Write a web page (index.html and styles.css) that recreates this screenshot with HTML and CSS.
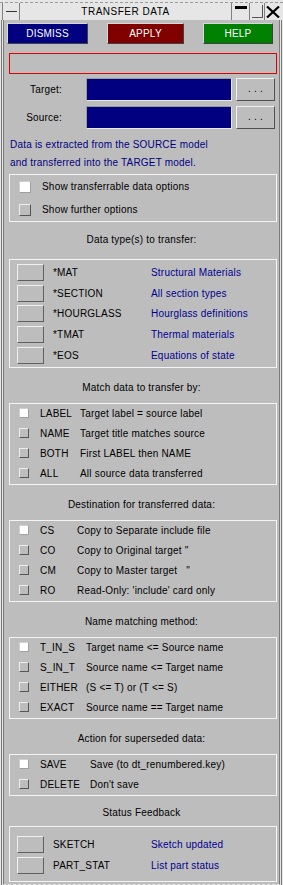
FILE: index.html
```html
<!DOCTYPE html>
<html>
<head>
    <meta charset="utf-8">
    <title>Transfer Data</title>
    <meta name="viewport" content="width=device-width, initial-scale=1">
    <link rel="stylesheet" href="styles.css">
</head>
<body>
    <div class="titlebar">
        <div class="tb-menu"><span class="tb-dash"></span></div>
        <div class="tb-title">TRANSFER DATA</div>
        <div class="tb-btn tb-min"><span></span></div>
        <div class="tb-btn tb-max"><span></span></div>
        <div class="tb-btn tb-close">
            <svg width="14" height="12" viewBox="0 0 14 12">
                <path d="M1 0.5 L13 11.5 M13 0.5 L1 11.5" stroke="#000" stroke-width="2.2" fill="none"/>
            </svg>
        </div>
    </div>

    <div class="frame">
    <div class="panel">
        <div class="actions">
            <div class="btn btn-dismiss">DISMISS</div>
            <div class="btn btn-apply">APPLY</div>
            <div class="btn btn-help">HELP</div>
        </div>

        <div class="message"></div>

        <div class="field-row">
            <div class="field-label">Target:</div>
            <div class="field"></div>
            <div class="browse">. . .</div>
        </div>
        <div class="field-row source-row">
            <div class="field-label">Source:</div>
            <div class="field"></div>
            <div class="browse">. . .</div>
        </div>

        <p class="note">Data is extracted from the SOURCE model<br>and transferred into the TARGET model.</p>

        <div class="group group-options">
            <div class="row"><span class="check big on"></span><span>Show transferrable data options</span></div>
            <div class="row"><span class="check big"></span><span>Show further options</span></div>
        </div>

        <div class="heading heading-first">Data type(s) to transfer:</div>
        <div class="group group-types">
            <div class="row"><span class="tbtn"></span><span class="code">*MAT</span><span class="desc">Structural Materials</span></div>
            <div class="row"><span class="tbtn"></span><span class="code">*SECTION</span><span class="desc">All section types</span></div>
            <div class="row"><span class="tbtn"></span><span class="code">*HOURGLASS</span><span class="desc">Hourglass definitions</span></div>
            <div class="row"><span class="tbtn"></span><span class="code">*TMAT</span><span class="desc">Thermal materials</span></div>
            <div class="row"><span class="tbtn"></span><span class="code">*EOS</span><span class="desc">Equations of state</span></div>
        </div>

        <div class="heading">Match data to transfer by:</div>
        <div class="group group-list group-match">
            <div class="row"><span class="check on"></span><span class="code">LABEL</span><span>Target label = source label</span></div>
            <div class="row"><span class="check"></span><span class="code">NAME</span><span>Target title matches source</span></div>
            <div class="row"><span class="check"></span><span class="code">BOTH</span><span>First LABEL then NAME</span></div>
            <div class="row"><span class="check"></span><span class="code">ALL</span><span>All source data transferred</span></div>
        </div>

        <div class="heading">Destination for transferred data:</div>
        <div class="group group-list group-dest">
            <div class="row"><span class="check on"></span><span class="code">CS</span><span>Copy to Separate include file</span></div>
            <div class="row"><span class="check"></span><span class="code">CO</span><span>Copy to Original target "</span></div>
            <div class="row"><span class="check"></span><span class="code">CM</span><span>Copy to Master target &nbsp; "</span></div>
            <div class="row"><span class="check"></span><span class="code">RO</span><span>Read-Only: 'include' card only</span></div>
        </div>

        <div class="heading">Name matching method:</div>
        <div class="group group-list group-names">
            <div class="row"><span class="check on"></span><span class="code">T_IN_S</span><span>Target name &lt;= Source name</span></div>
            <div class="row"><span class="check"></span><span class="code">S_IN_T</span><span>Source name &lt;= Target name</span></div>
            <div class="row"><span class="check"></span><span class="code">EITHER</span><span>(S &lt;= T) or (T &lt;= S)</span></div>
            <div class="row"><span class="check"></span><span class="code">EXACT</span><span>Source name == Target name</span></div>
        </div>

        <div class="heading">Action for superseded data:</div>
        <div class="group group-list group-action">
            <div class="row"><span class="check on"></span><span class="code">SAVE</span><span>Save (to dt_renumbered.key)</span></div>
            <div class="row"><span class="check"></span><span class="code">DELETE</span><span>Don't save</span></div>
        </div>

        <div class="heading heading-last">Status Feedback</div>
        <div class="group group-types group-status">
            <div class="row"><span class="tbtn"></span><span class="code">SKETCH</span><span class="desc">Sketch updated</span></div>
            <div class="row"><span class="tbtn"></span><span class="code">PART_STAT</span><span class="desc">List part status</span></div>
        </div>
    </div>
    </div>
</body>
</html>
```

FILE: styles.css
```css
body {
    margin: 0;
    width: 283px;
    height: 885px;
    overflow: hidden;
    background-color: #e6e6e6;
    color: #000;
    font-family: "Liberation Sans", Arial, sans-serif;
    font-size: 10px;
    letter-spacing: 0.2px;
}

/* window title bar */
.titlebar {
    display: flex;
    box-sizing: border-box;
    border-top: 1px dashed #9a9a9a;
    margin-top: 2px;
    height: 18px;
    background-color: #e6e6e6;
}

.tb-menu {
    width: 16px;
    margin-left: 2px;
    border-left: 1px solid #808080;
    border-right: 1px solid #808080;
    display: flex;
    align-items: center;
    justify-content: center;
}

.tb-dash {
    width: 11px;
    height: 1px;
    background-color: #333;
}

.tb-title {
    flex: 1;
    text-align: center;
    line-height: 17px;
    font-size: 10px;
    letter-spacing: 0.5px;
    border-right: 1px solid #808080;
}

.tb-btn {
    display: flex;
    align-items: center;
    justify-content: center;
}

.tb-min {
    width: 17px;
    border-right: 1px solid #808080;
    align-items: flex-start;
}

.tb-min span {
    width: 12px;
    height: 3px;
    margin-top: 3px;
    background-color: #000;
}

.tb-max {
    width: 14px;
    align-items: flex-end;
    justify-content: flex-end;
}

.tb-max span {
    width: 10px;
    height: 12px;
    margin: 0 1px 2px 0;
    border-right: 1px solid #555;
    border-bottom: 1px solid #555;
}

.tb-close {
    width: 16px;
    margin-right: 2px;
    border-left: 1px solid #808080;
}

/* outer frame */
.frame {
    margin: 0 1px;
    padding: 0 1px;
    border-left: 1px solid #7a7a7a;
    border-right: 1px solid #7a7a7a;
    height: 865px;
}

.panel {
    background-color: #bdbdbd;
    border-left: 1px solid #7a7a7a;
    border-right: 1px solid #7a7a7a;
    border-bottom: 1px dashed #e6e6e6;
    height: 865px;
    box-sizing: border-box;
}

/* top buttons */
.actions {
    display: flex;
    gap: 19px;
    padding: 3px 0 0 3px;
}

.btn {
    height: 21px;
    box-sizing: border-box;
    color: #fff;
    text-align: center;
    line-height: 19px;
    border: 1px solid;
    border-color: #d8d8d8 #404040 #404040 #d8d8d8;
}

.btn-dismiss {
    width: 81px;
    background-color: #000080;
}

.btn-apply {
    width: 77px;
    background-color: #800000;
}

.btn-help {
    width: 70px;
    background-color: #008000;
}

.message {
    margin: 9px 0 0 5px;
    width: 268px;
    height: 21px;
    box-sizing: border-box;
    border: 1px solid #e00000;
}

/* target / source */
.field-row {
    display: flex;
    align-items: center;
    margin-top: 4px;
    height: 23px;
}

.source-row {
    margin-top: 5px;
}

.field-label {
    width: 58px;
    text-align: right;
    margin-right: 24px;
}

.field {
    width: 146px;
    height: 23px;
    box-sizing: border-box;
    background-color: #000080;
    border: 1px solid;
    border-color: #9a9a9a #e8e8e8 #e8e8e8 #9a9a9a;
}

.browse {
    width: 39px;
    height: 23px;
    margin-left: 4px;
    box-sizing: border-box;
    text-align: center;
    line-height: 20px;
    border: 1px solid;
    border-color: #f0f0f0 #505050 #505050 #f0f0f0;
}

.note {
    margin: 7px 0 0 6px;
    line-height: 18px;
    color: #000080;
}

/* grouped boxes */
.group {
    margin: 2px 0 0 5px;
    width: 268px;
    box-sizing: border-box;
    border: 1px solid #f4f4f4;
}

.row {
    display: flex;
    align-items: center;
    height: 23px;
    white-space: nowrap;
}

.heading {
    text-align: center;
    line-height: 18px;
    padding: 11px 0 6px;
}

.heading-first {
    padding: 9px 0 10px;
}

.heading-last {
    padding: 8px 0 4px;
}

.heading + .group {
    margin-top: 0;
}

.check {
    width: 10px;
    height: 10px;
    margin: 0 11px 0 9px;
    box-sizing: border-box;
    border: 1px solid;
    border-color: #eeeeee #555 #555 #eeeeee;
}

.check.big {
    width: 12px;
    height: 12px;
    margin-right: 11px;
}

.check.on {
    background-color: #fff;
    border-color: #d0d0d0 #a0a0a0 #a0a0a0 #d0d0d0;
}

.group-list .row {
    height: 20px;
    box-sizing: border-box;
    padding-bottom: 2px;
}

.group-match .code { width: 40px; }
.group-dest .code { width: 37px; }
.group-names .code { width: 46px; }
.group-action .code { width: 50px; }

.group-types {
    padding: 2px 0;
}

.group-types .row {
    height: 20.7px;
}

.tbtn {
    width: 27px;
    height: 17px;
    margin: 0 9px 0 7px;
    box-sizing: border-box;
    border: 1px solid;
    border-color: #efefef #606060 #606060 #efefef;
}

.group-types .code {
    width: 98px;
}

.desc {
    color: #000090;
}

.group-status {
    padding: 9px 0 3px;
}

.group-status .row {
    height: 21px;
    align-items: flex-start;
}

.group-status .code,
.group-status .desc {
    line-height: 17px;
}
```
